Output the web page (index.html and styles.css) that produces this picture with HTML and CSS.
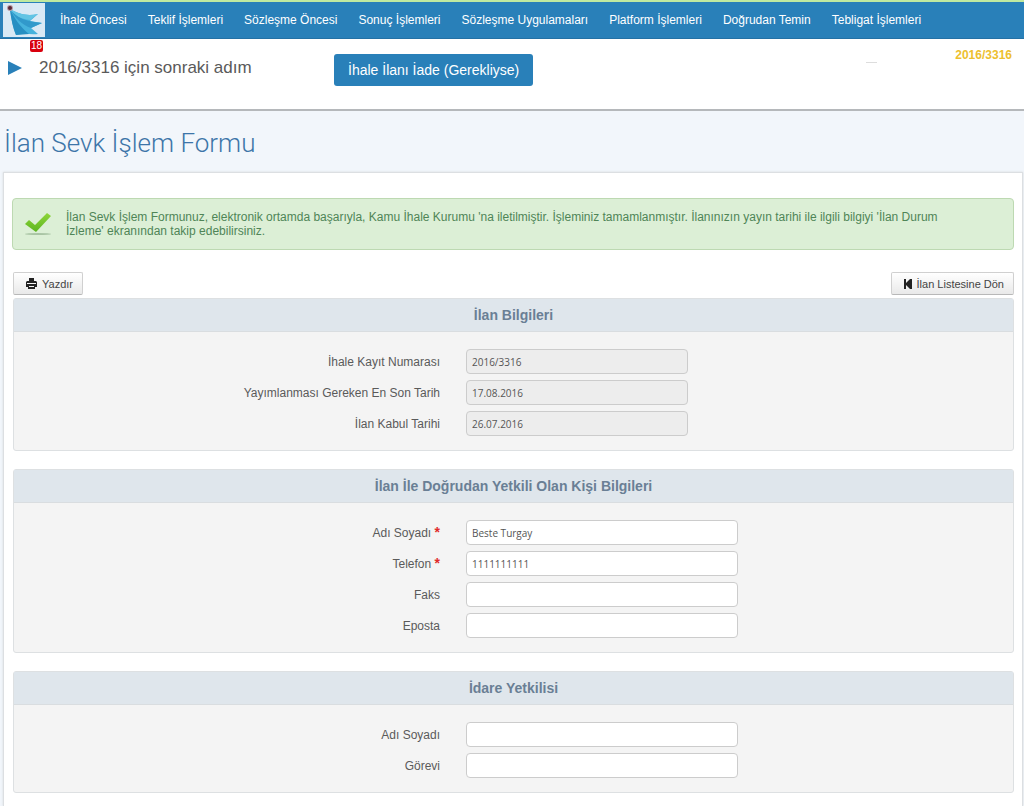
FILE: index.html
```html
<!DOCTYPE html>
<html lang="tr">
<head>
<meta charset="utf-8">
<title>İlan Sevk İşlem Formu</title>
<link rel="stylesheet" href="styles.css">
</head>
<body>
<header class="topbar">
  <a class="logo" href="#" aria-label="Ana sayfa">
    <svg viewBox="0 0 42 34" width="42" height="34" aria-hidden="true">
      <rect width="42" height="34" fill="#d9e9f5"/>
      <path d="M7 6C18 12 25 13 35 11L27 18L39 20L28 25L35 31C29 32 20 30 13 32C10 25 8 15 7 6Z" fill="#45b2dc"/>
      <path d="M7 6C8 16 10 25 13 32L26 31C18 25 11 15 7 6Z" fill="#278fc2"/>
      <path d="M7 6C15 15 21 18 39 20L28 25C19 22 12 15 7 6Z" fill="#3199cb"/>
      <path d="M7 6C18 12 25 13 35 11L27 17C18 16 11 12 7 6Z" fill="#62c4e4"/>
      <circle cx="7" cy="5" r="3" fill="#b99aa5"/>
      <circle cx="7" cy="5" r="2" fill="#5c2835"/>
    </svg>
    <span class="badge">18</span>
  </a>
  <nav class="menu">
    <a href="#">İhale Öncesi</a>
    <a href="#">Teklif İşlemleri</a>
    <a href="#">Sözleşme Öncesi</a>
    <a href="#">Sonuç İşlemleri</a>
    <a href="#">Sözleşme Uygulamaları</a>
    <a href="#">Platform İşlemleri</a>
    <a href="#">Doğrudan Temin</a>
    <a href="#">Tebligat İşlemleri</a>
  </nav>
</header>
<section class="step">
  <svg class="arrow" viewBox="0 0 14 14" width="14" height="14" aria-hidden="true"><path d="M0 0L14 7L0 14Z" fill="#2980b9"/></svg>
  <p class="step-text">2016/3316 için sonraki adım</p>
  <button class="primary" type="button">İhale İlanı İade (Gerekliyse)</button>
  <span class="mark"></span>
  <strong class="tender">2016/3316</strong>
</section>
<main class="page">
  <h1 class="title">İlan Sevk İşlem Formu</h1>
  <form class="card">
    <div class="alert" role="status">
      <svg class="tick" viewBox="0 0 28 24" width="28" height="24" aria-hidden="true">
        <defs><linearGradient id="tick" x1="0" y1="0" x2="0" y2="1"><stop offset="0" stop-color="#8fd63b"/><stop offset="1" stop-color="#5cb51f"/></linearGradient></defs>
        <ellipse cx="14" cy="22" rx="13" ry="1" fill="#a9c4a4"/>
        <path d="M1 12L5 8L11 13L23 1L27 4L12 20Z" fill="url(#tick)"/>
      </svg>
      <p class="alert-text">İlan Sevk İşlem Formunuz, elektronik ortamda başarıyla, Kamu İhale Kurumu 'na iletilmiştir. İşleminiz tamamlanmıştır. İlanınızın yayın tarihi ile ilgili bilgiyi 'İlan Durum İzleme' ekranından takip edebilirsiniz.</p>
    </div>
    <div class="toolbar">
      <button class="plain" type="button">
        <svg viewBox="0 0 11 11" width="11" height="11" aria-hidden="true"><path d="M3 0H8V3H10L11 4V9H9V11H2V9H0V4L1 3H3Z" fill="#222"/><path d="M1 5.500H10M3 8.500H8" stroke="#f4f4f4"/></svg>
        Yazdır
      </button>
      <button class="plain" type="button">
        <svg viewBox="0 0 8 10" width="8" height="10" aria-hidden="true"><path d="M0 0H2V4L6 0H8V10H6L2 6V10H0Z" fill="#222"/></svg>
        İlan Listesine Dön
      </button>
    </div>
    <div class="panels">
      <section class="panel">
        <h2 class="panel-title">İlan Bilgileri</h2>
        <div class="fields">
          <label for="ikn">İhale Kayıt Numarası</label><input class="short" id="ikn" value="2016/3316" readonly>
          <label for="son">Yayımlanması Gereken En Son Tarih</label><input class="short" id="son" value="17.08.2016" readonly>
          <label for="kabul">İlan Kabul Tarihi</label><input class="short" id="kabul" value="26.07.2016" readonly>
        </div>
      </section>
      <section class="panel">
        <h2 class="panel-title">İlan İle Doğrudan Yetkili Olan Kişi Bilgileri</h2>
        <div class="fields">
          <label for="ad">Adı Soyadı <span class="required">*</span></label><input id="ad" value="Beste Turgay" required>
          <label for="tel">Telefon <span class="required">*</span></label><input id="tel" type="tel" value="1111111111" required>
          <label for="faks">Faks</label><input id="faks" type="tel">
          <label for="eposta">Eposta</label><input id="eposta" type="email">
        </div>
      </section>
      <section class="panel">
        <h2 class="panel-title">İdare Yetkilisi</h2>
        <div class="fields">
          <label for="yetkili">Adı Soyadı</label><input id="yetkili">
          <label for="gorev">Görevi</label><input id="gorev">
        </div>
      </section>
    </div>
  </form>
</main>
</body>
</html>
```

FILE: styles.css
```css
* { box-sizing: border-box; }
body {
  margin: 0;
  min-height: 100vh;
  display: flex;
  flex-direction: column;
  background: #f2f6fb;
  color: #5a5a5a;
  font: 12px/14px "Liberation Sans", Arial, sans-serif;
}
p, h1, h2 { margin: 0; }
.topbar {
  display: flex;
  align-items: center;
  height: 39px;
  padding: 0 3px;
  background: #2980b9;
  border-top: 2px solid #bfe9a0;
  border-bottom: 1px solid #2471a5;
}
.logo { position: relative; display: flex; }
.badge {
  position: absolute;
  right: 2px;
  top: 37px;
  padding: 0 1px;
  border-radius: 2px;
  background: #d9000d;
  color: #fff;
  font-size: 10px;
  line-height: 12px;
}
.menu { display: flex; gap: 21px; margin-left: 15px; }
.menu a { color: #fff; text-decoration: none; white-space: nowrap; }
.step {
  display: flex;
  align-items: flex-start;
  height: 72px;
  padding: 15px 12px 0 8px;
  background: #fff;
  border-bottom: 2px solid #b5b8bb;
}
.arrow { margin-top: 7px; }
.step-text { width: 278px; margin: 4px 0 0 17px; font-size: 17px; line-height: 20px; }
.primary {
  height: 32px;
  margin-left: 17px;
  padding: 0 14px;
  border: 0;
  border-radius: 3px;
  background: #2980b9;
  color: #fff;
  font: 14px "Liberation Sans", Arial, sans-serif;
}
.mark { width: 11px; height: 1px; margin: 8px 78px 0 auto; background: #ddd; }
.tender { margin-top: -7px; color: #edc02f; line-height: 16px; }
.page { flex: 1; display: flex; flex-direction: column; padding: 14px 1px 0 3px; }
.title { padding-left: 1px; color: #3d75a8; font: 300 26px/36px Roboto, sans-serif; }
.card {
  flex: 1;
  margin-top: 11px;
  padding: 25px 8px 12px 8px;
  background: #fff;
  border: 1px solid #dcdfe2;
  border-bottom: 0;
  box-shadow: 0 0 2px #d5d8db;
}
.alert {
  display: flex;
  align-items: flex-start;
  gap: 14px;
  padding: 11px 42px 11px 11px;
  background: #dcefd6;
  border: 1px solid #bdd9b2;
  border-radius: 4px;
  color: #4f8557;
}
.tick { flex: none; margin-top: 2px; }
.toolbar { display: flex; justify-content: space-between; margin: 22px 0 3px 1px; }
.plain {
  display: flex;
  align-items: center;
  gap: 5px;
  height: 23px;
  padding: 0 9px 0 12px;
  border: 1px solid #d0d0d0;
  border-bottom-color: #b8b8b8;
  border-radius: 2px;
  background: linear-gradient(#fff, #e9e9e9);
  color: #444;
  font: 11px "Liberation Sans", Arial, sans-serif;
}
.panels { display: flex; flex-direction: column; gap: 18px; margin-left: 1px; }
.panel { border: 1px solid #dde0e2; border-radius: 3px; background: #f4f4f4; }
.panel-title {
  border-bottom: 1px solid #d9dde0;
  background: #dfe6ec;
  color: #6a7f95;
  font-size: 14px;
  line-height: 32px;
  text-align: center;
}
.fields {
  display: grid;
  grid-template-columns: 426fr 547fr;
  align-items: center;
  gap: 6px 26px;
  padding: 17px 0 14px;
}
.fields label { text-align: right; }
.fields input {
  width: 272px;
  height: 25px;
  padding: 0 5px;
  border: 1px solid #ccc;
  border-radius: 4px;
  background: #fff;
  color: #555;
  font: 10px "Open Sans", sans-serif;
}
.fields .short { width: 222px; background: #ededed; }
.required { color: #e02b2b; font-size: 14px; font-weight: bold; }
```
